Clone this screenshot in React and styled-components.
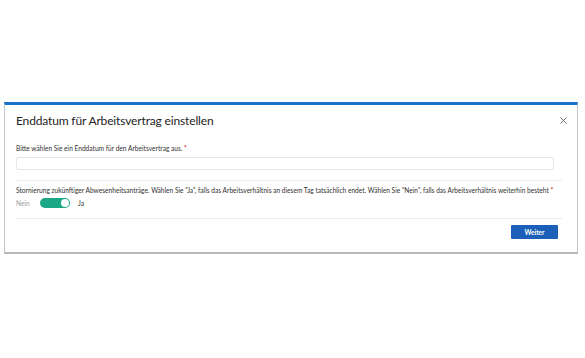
import React, { useState } from "react";
import styled, { createGlobalStyle } from "styled-components";

const Global = createGlobalStyle`
  html, body { margin: 0; padding: 0; background: #ffffff; }
  body { font-family: Lato, "Open Sans", sans-serif; color: #323130; }
`;

const Page = styled.div`
  padding: 102px 7px 0 4px;
`;

const Dialog = styled.div`
  box-sizing: border-box;
  width: 574px;
  height: 152px;
  background: #fff;
  border-top: 3px solid #1a73c9;
  border-left: 1px solid #c6c6c6;
  border-right: 1px solid #c6c6c6;
  border-bottom: 2px solid #b8b8b8;
  display: flex;
  flex-direction: column;
  padding: 0 9px 0 11px;
`;

const Header = styled.div`
  display: flex;
  align-items: center;
  justify-content: space-between;
  height: 30px;
`;

const Title = styled.h1`
  margin: 0;
  font-size: 12px;
  letter-spacing: -0.15px;
  font-weight: 400;
  color: #242424;
`;

const Close = styled.button`
  border: 0;
  background: none;
  padding: 0;
  width: 10px;
  height: 10px;
  display: flex;
  align-items: center;
  justify-content: center;
  cursor: pointer;
`;

const Label = styled.div`
  font-size: 6.6px;
  color: #323130;
  line-height: 9px;
  white-space: nowrap;
`;

const Req = styled.span`
  color: #c50f1f;
`;

const Field = styled.div`
  box-sizing: border-box;
  width: 538px;
  height: 13px;
  border: 1px solid #e6e6e6;
  border-radius: 2px;
  margin-top: 4px;
`;

const Divider = styled.div`
  height: 1px;
  background: #ededed;
  width: 546px;
`;

const Section = styled.div`
  display: flex;
  flex-direction: column;
  padding-top: ${(p) => p.$top}px;
  padding-bottom: ${(p) => p.$bottom}px;
`;

const ToggleRow = styled.div`
  display: flex;
  align-items: center;
  gap: 10px;
  font-size: 6.6px;
  margin-top: 3px;
  height: 10px;
`;

const Off = styled.span`
  color: #a19f9d;
  min-width: 14px;
`;

const On = styled.span`
  color: #323130;
  margin-left: -2px;
`;

const Track = styled.div`
  width: 30px;
  height: 10px;
  flex: none;
  border-radius: 5px;
  background: #1aa887;
  display: flex;
  align-items: center;
  justify-content: ${(p) => (p.$on ? "flex-end" : "flex-start")};
  padding: 0 1px;
  box-sizing: border-box;
  cursor: pointer;
`;

const Knob = styled.div`
  width: 8px;
  height: 8px;
  border-radius: 50%;
  background: #fff;
`;

const Footer = styled.div`
  display: flex;
  justify-content: flex-end;
  width: 542px;
  padding-top: 6px;
`;

const Button = styled.button`
  width: 47px;
  height: 14px;
  border: 0;
  border-radius: 1px;
  background: #1b5fb8;
  color: #fff;
  font-family: Lato, "Open Sans", sans-serif;
  font-size: 6.6px;
  font-weight: 700;
  padding: 0;
`;

export default function App() {
  const [on, setOn] = useState(true);
  return (
    <Page>
      <Global />
      <Dialog>
        <Header>
          <Title>Enddatum für Arbeitsvertrag einstellen</Title>
          <Close aria-label="Schließen">
            <svg width="7" height="7" viewBox="0 0 7 7">
              <path d="M0.5 0.5 L6.5 6.5 M6.5 0.5 L0.5 6.5" stroke="#605e5c" strokeWidth="0.9" />
            </svg>
          </Close>
        </Header>
        <Section $top={9} $bottom={10}>
          <Label>
            Bitte wählen Sie ein Enddatum für den Arbeitsvertrag aus. <Req>*</Req>
          </Label>
          <Field />
        </Section>
        <Divider />
        <Section $top={5} $bottom={10}>
          <Label>
            Stornierung zukünftiger Abwesenheitsanträge. Wählen Sie "Ja", falls das Arbeitsverhältnis an diesem Tag tatsächlich endet. Wählen Sie "Nein", falls das Arbeitsverhältnis weiterhin besteht <Req>*</Req>
          </Label>
          <ToggleRow>
            <Off>Nein</Off>
            <Track $on={on} onClick={() => setOn(!on)}>
              <Knob />
            </Track>
            <On>Ja</On>
          </ToggleRow>
        </Section>
        <Divider />
        <Footer>
          <Button>Weiter</Button>
        </Footer>
      </Dialog>
    </Page>
  );
}
